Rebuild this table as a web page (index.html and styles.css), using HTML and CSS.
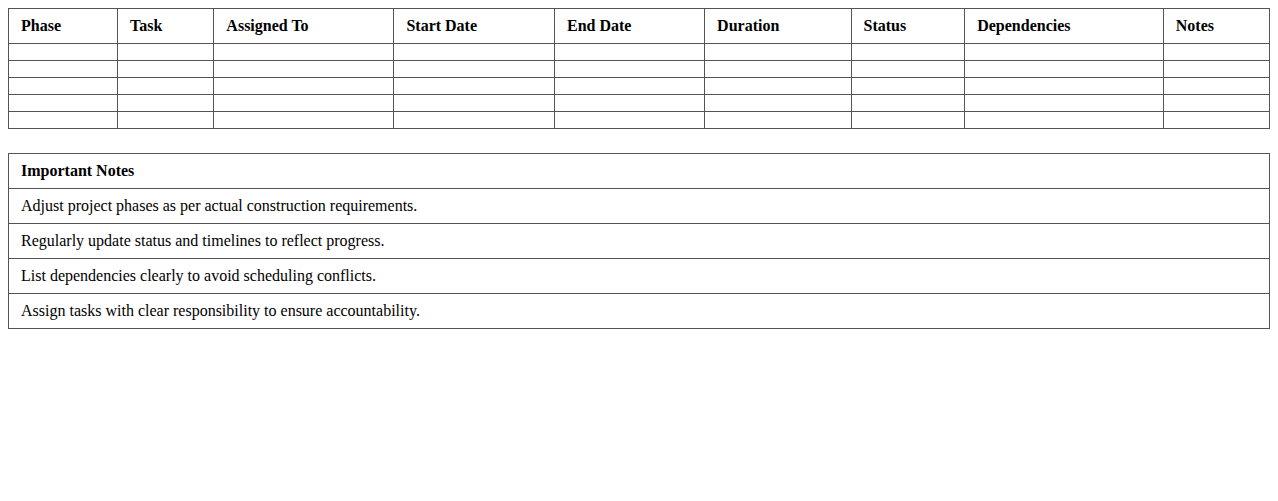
FILE: index.html
```html
<!DOCTYPE html>
<html>
<head>
<meta charset="utf-8">
<link rel="stylesheet" href="styles.css">
</head>
<body>
<table class="schedule">
  <thead>
    <tr>
      <th>Phase</th><th>Task</th><th>Assigned To</th><th>Start Date</th><th>End Date</th><th>Duration</th><th>Status</th><th>Dependencies</th><th>Notes</th>
    </tr>
  </thead>
  <tbody>
    <tr><td></td><td></td><td></td><td></td><td></td><td></td><td></td><td></td><td></td></tr>
    <tr><td></td><td></td><td></td><td></td><td></td><td></td><td></td><td></td><td></td></tr>
    <tr><td></td><td></td><td></td><td></td><td></td><td></td><td></td><td></td><td></td></tr>
    <tr><td></td><td></td><td></td><td></td><td></td><td></td><td></td><td></td><td></td></tr>
    <tr><td></td><td></td><td></td><td></td><td></td><td></td><td></td><td></td><td></td></tr>
  </tbody>
</table>
<table class="notes">
  <thead><tr><th>Important Notes</th></tr></thead>
  <tbody>
    <tr><td>Adjust project phases as per actual construction requirements.</td></tr>
    <tr><td>Regularly update status and timelines to reflect progress.</td></tr>
    <tr><td>List dependencies clearly to avoid scheduling conflicts.</td></tr>
    <tr><td>Assign tasks with clear responsibility to ensure accountability.</td></tr>
  </tbody>
</table>
</body>
</html>
```
FILE: styles.css
```css
body {
  margin: 8px;
  font-family: "Liberation Serif", "Times New Roman", serif;
  font-size: 16px;
  color: #000;
  background: #fff;
}
table {
  width: 100%;
  border-collapse: collapse;
}
th, td {
  border: 1px solid #555;
  padding: 8px 12px;
  text-align: left;
}
th {
  font-weight: bold;
}
.notes {
  margin-top: 24px;
}
.notes th, .notes td {
  line-height: 18px;
}
.schedule th { line-height: 18px; }
```
